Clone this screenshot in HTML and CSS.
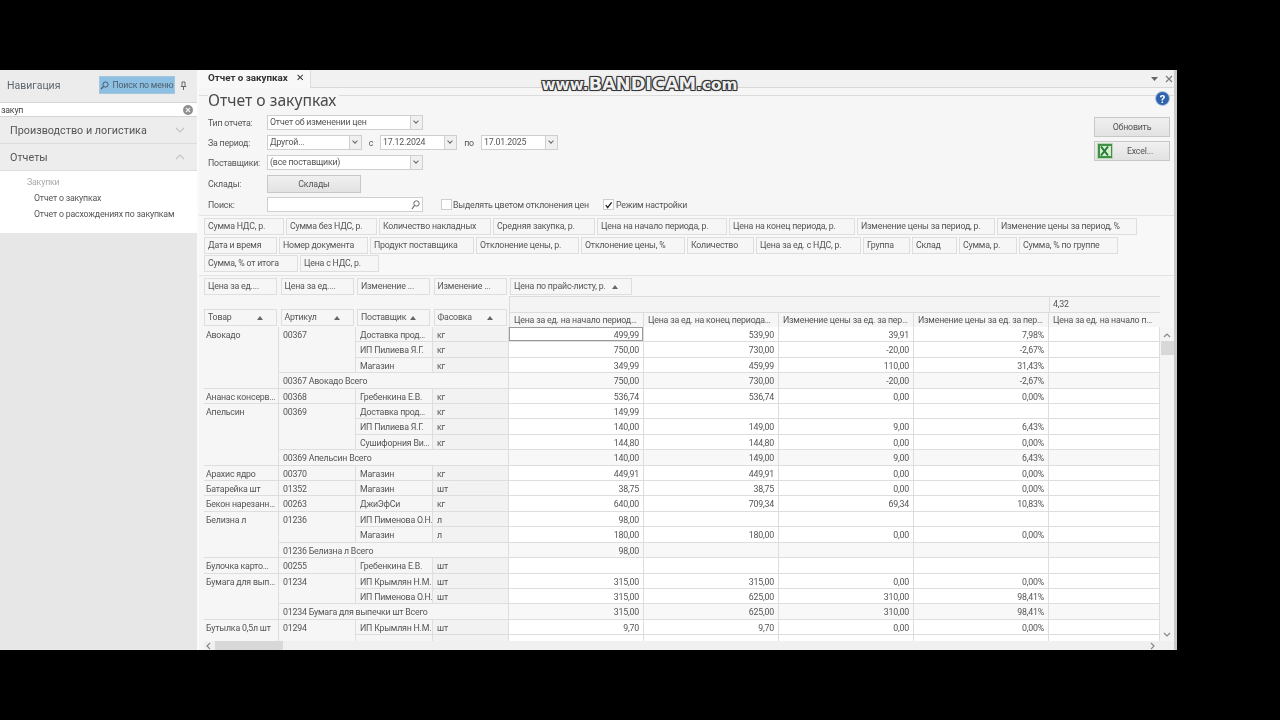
FILE: index.html
```html
<!DOCTYPE html>
<html lang="ru">
<head>
    <meta charset="UTF-8">
    <title>Отчет о закупках</title>
    <link rel="stylesheet" href="styles.css">
</head>
<body>
    <div class="app">
        <!-- Navigation -->
        <aside class="nav">
            <div class="nav-head">
                <span class="nav-title">Навигация</span>
                <button class="nav-find">
                    <svg width="9" height="9" viewBox="0 0 9 9"><circle cx="5.5" cy="3.5" r="2.6" fill="none" stroke="#4a5a68"/><path d="M3.6 5.4 1 8" stroke="#4a5a68" stroke-width="1.2"/></svg>
                    Поиск по меню
                </button>
                <svg class="nav-pin" width="7" height="9" viewBox="0 0 7 9"><path d="M2 1h3v3.5l1 1H1l1-1zM3.5 5.5V9" fill="none" stroke="#666"/></svg>
            </div>
            <div class="nav-search">
                <span>закуп</span>
                <svg width="10" height="10" viewBox="0 0 10 10"><circle cx="5" cy="5" r="5" fill="#8f8f8f"/><path d="M3 3l4 4M7 3 3 7" stroke="#eee" stroke-width="1.2"/></svg>
            </div>
            <div class="nav-section">
                Производство и логистика
                <svg width="10" height="6" viewBox="0 0 10 6"><path d="M1 1l4 4 4-4" fill="none" stroke="#c4c4c4" stroke-width="1.2"/></svg>
            </div>
            <div class="nav-section">
                Отчеты
                <svg width="10" height="6" viewBox="0 0 10 6"><path d="M1 5l4-4 4 4" fill="none" stroke="#c4c4c4" stroke-width="1.2"/></svg>
            </div>
            <div class="nav-items">
                <div class="nav-group">Закупки</div>
                <div class="nav-item">Отчет о закупках</div>
                <div class="nav-item">Отчет о расхождениях по закупкам</div>
            </div>
        </aside>

        <!-- Document -->
        <main class="doc">
            <div class="tabbar">
                <div class="tab">Отчет о закупках <span class="tab-close">✕</span></div>
                <div class="tabbar-tools">
                    <svg width="7" height="4" viewBox="0 0 7 4"><path d="M0 0h7L3.500 4z" fill="#666"/></svg>
                    <svg width="8" height="8" viewBox="0 0 8 8"><path d="M1 1l6 6M7 1 1 7" stroke="#777" stroke-width="1.1"/></svg>
                </div>
            </div>
            <div class="report">
                <h1 class="report-title">Отчет о закупках</h1>
                <svg class="help" width="15" height="15" viewBox="0 0 15 15"><circle cx="7.500" cy="7.500" r="7" fill="#2f62ad" stroke="#b9cbe4"/><text x="7.500" y="11.500" text-anchor="middle" class="help-mark">?</text></svg>

                <div class="report-top">
                    <div class="form">
                        <div class="form-row">
                            <label>Тип отчета:</label>
                            <div class="select wide">Отчет об изменении цен</div>
                        </div>
                        <div class="form-row">
                            <label>За период:</label>
                            <div class="select period">Другой...</div>
                            <span class="sep-c">с</span>
                            <div class="select date">17.12.2024</div>
                            <span class="sep-po">по</span>
                            <div class="select date">17.01.2025</div>
                        </div>
                        <div class="form-row">
                            <label>Поставщики:</label>
                            <div class="select wide">(все поставщики)</div>
                        </div>
                        <div class="form-row tall">
                            <label>Склады:</label>
                            <button class="btn btn-stock">Склады</button>
                        </div>
                        <div class="form-row">
                            <label>Поиск:</label>
                            <div class="search-box">
                                <svg width="9" height="10" viewBox="0 0 9 10"><circle cx="5.500" cy="3.500" r="2.700" fill="none" stroke="#666"/><path d="M3.500 5.500 1 9" stroke="#666" stroke-width="1.200"/></svg>
                            </div>
                            <span class="check first"></span>
                            <span class="check-label">Выделять цветом отклонения цен</span>
                            <span class="check on">
                                <svg width="10" height="10" viewBox="0 0 10 10"><path d="M2 5l2 3 4.500-6" fill="none" stroke="#222" stroke-width="1.500"/></svg>
                            </span>
                            <span class="check-label">Режим настройки</span>
                        </div>
                    </div>
                    <div class="actions">
                        <button class="btn btn-action">Обновить</button>
                        <button class="btn btn-action btn-excel">
                            <svg width="16" height="16" viewBox="0 0 16 16"><rect x=".5" y=".5" width="15" height="15" fill="#3f9148" stroke="#b7d6b4"/><rect x="3" y="3" width="11" height="10" fill="#d9ecd2"/><path d="M4 3.500l7 9M11 3.500l-7 9" stroke="#1f7a33" stroke-width="2"/></svg>
                            <span>Excel...</span>
                        </button>
                    </div>
                </div>

                <div class="chip-panel">
                    <div class="chip-row row-a">
                        <span class="chip">Сумма НДС, р.</span>
                        <span class="chip">Сумма без НДС, р.</span>
                        <span class="chip">Количество накладных</span>
                        <span class="chip">Средняя закупка, р.</span>
                        <span class="chip">Цена на начало периода, р.</span>
                        <span class="chip">Цена на конец периода, р.</span>
                        <span class="chip">Изменение цены за период, р.</span>
                        <span class="chip">Изменение цены за период, %</span>
                    </div>
                    <div class="chip-row row-b">
                        <span class="chip">Дата и время</span>
                        <span class="chip">Номер документа</span>
                        <span class="chip">Продукт поставщика</span>
                        <span class="chip">Отклонение цены, р.</span>
                        <span class="chip">Отклонение цены, %</span>
                        <span class="chip">Количество</span>
                        <span class="chip">Цена за ед. с НДС, р.</span>
                        <span class="chip">Группа</span>
                        <span class="chip">Склад</span>
                        <span class="chip">Сумма, р.</span>
                        <span class="chip">Сумма, % по группе</span>
                    </div>
                    <div class="chip-row row-c">
                        <span class="chip">Сумма, % от итога</span>
                        <span class="chip">Цена с НДС, р.</span>
                    </div>
                </div>

                <!-- Pivot grid -->
                <div class="pivot">
                    <div class="pivot-head">
                        <div class="head-left">
                            <div class="field-row">
                                <span class="chip">Цена за ед....</span>
                                <span class="chip">Цена за ед....</span>
                                <span class="chip">Изменение ...</span>
                                <span class="chip">Изменение ...</span>
                            </div>
                            <div class="field-row">
                                <span class="chip sort">Товар</span>
                                <span class="chip sort">Артикул</span>
                                <span class="chip sort">Поставщик</span>
                                <span class="chip sort">Фасовка</span>
                            </div>
                        </div>
                        <div class="head-right">
                            <div class="price-row"><span class="chip sort near">Цена по прайс-листу, р.</span></div>
                            <div class="band-row"><span class="band-empty"></span><span class="band-value">4,32</span></div>
                            <div class="col-row">
                                <span>Цена за ед. на начало период…</span>
                                <span>Цена за ед. на конец периода…</span>
                                <span>Изменение цены за ед. за пер…</span>
                                <span>Изменение цены за ед. за пер…</span>
                                <span>Цена за ед. на начало п…</span>
                            </div>
                        </div>
                    </div>
                    <div class="pivot-body">
                        <div class="table-clip">
                            <table class="grid">
                                <colgroup>
                                    <col class="c-product"><col class="c-code"><col class="c-vendor"><col class="c-pack">
                                    <col class="c-a"><col class="c-a"><col class="c-a"><col class="c-a"><col class="c-last">
                                </colgroup>
                                <tr><td rowspan="4" class="top">Авокадо</td><td rowspan="3" class="top">00367</td><td>Доставка прод…</td><td class="pack">кг</td><td class="num current">499,99</td><td class="num">539,90</td><td class="num">39,91</td><td class="num">7,98%</td><td class="num"></td></tr>
                                <tr><td>ИП Пилиева Я.Г.</td><td class="pack">кг</td><td class="num">750,00</td><td class="num">730,00</td><td class="num">-20,00</td><td class="num">-2,67%</td><td class="num"></td></tr>
                                <tr><td>Магазин</td><td class="pack">кг</td><td class="num">349,99</td><td class="num">459,99</td><td class="num">110,00</td><td class="num">31,43%</td><td class="num"></td></tr>
                                <tr class="total"><td colspan="3">00367 Авокадо Всего</td><td class="num">750,00</td><td class="num">730,00</td><td class="num">-20,00</td><td class="num">-2,67%</td><td class="num"></td></tr>
                                <tr><td>Ананас консерв…</td><td>00368</td><td>Гребенкина Е.В.</td><td class="pack">кг</td><td class="num">536,74</td><td class="num">536,74</td><td class="num">0,00</td><td class="num">0,00%</td><td class="num"></td></tr>
                                <tr><td rowspan="4" class="top">Апельсин</td><td rowspan="3" class="top">00369</td><td>Доставка прод…</td><td class="pack">кг</td><td class="num">149,99</td><td class="num"></td><td class="num"></td><td class="num"></td><td class="num"></td></tr>
                                <tr><td>ИП Пилиева Я.Г.</td><td class="pack">кг</td><td class="num">140,00</td><td class="num">149,00</td><td class="num">9,00</td><td class="num">6,43%</td><td class="num"></td></tr>
                                <tr><td>Сушифорния Ви…</td><td class="pack">кг</td><td class="num">144,80</td><td class="num">144,80</td><td class="num">0,00</td><td class="num">0,00%</td><td class="num"></td></tr>
                                <tr class="total"><td colspan="3">00369 Апельсин Всего</td><td class="num">140,00</td><td class="num">149,00</td><td class="num">9,00</td><td class="num">6,43%</td><td class="num"></td></tr>
                                <tr><td>Арахис ядро</td><td>00370</td><td>Магазин</td><td class="pack">кг</td><td class="num">449,91</td><td class="num">449,91</td><td class="num">0,00</td><td class="num">0,00%</td><td class="num"></td></tr>
                                <tr><td>Батарейка шт</td><td>01352</td><td>Магазин</td><td class="pack">шт</td><td class="num">38,75</td><td class="num">38,75</td><td class="num">0,00</td><td class="num">0,00%</td><td class="num"></td></tr>
                                <tr><td>Бекон нарезанн…</td><td>00263</td><td>ДжиЭфСи</td><td class="pack">кг</td><td class="num">640,00</td><td class="num">709,34</td><td class="num">69,34</td><td class="num">10,83%</td><td class="num"></td></tr>
                                <tr><td rowspan="3" class="top">Белизна л</td><td rowspan="2" class="top">01236</td><td>ИП Пименова О.Н.</td><td class="pack">л</td><td class="num">98,00</td><td class="num"></td><td class="num"></td><td class="num"></td><td class="num"></td></tr>
                                <tr><td>Магазин</td><td class="pack">л</td><td class="num">180,00</td><td class="num">180,00</td><td class="num">0,00</td><td class="num">0,00%</td><td class="num"></td></tr>
                                <tr class="total"><td colspan="3">01236 Белизна л Всего</td><td class="num">98,00</td><td class="num"></td><td class="num"></td><td class="num"></td><td class="num"></td></tr>
                                <tr><td>Булочка карто…</td><td>00255</td><td>Гребенкина Е.В.</td><td class="pack">шт</td><td class="num"></td><td class="num"></td><td class="num"></td><td class="num"></td><td class="num"></td></tr>
                                <tr><td rowspan="3" class="top">Бумага для вып…</td><td rowspan="2" class="top">01234</td><td>ИП Крымлян Н.М.</td><td class="pack">шт</td><td class="num">315,00</td><td class="num">315,00</td><td class="num">0,00</td><td class="num">0,00%</td><td class="num"></td></tr>
                                <tr><td>ИП Пименова О.Н.</td><td class="pack">шт</td><td class="num">315,00</td><td class="num">625,00</td><td class="num">310,00</td><td class="num">98,41%</td><td class="num"></td></tr>
                                <tr class="total"><td colspan="3">01234 Бумага для выпечки шт Всего</td><td class="num">315,00</td><td class="num">625,00</td><td class="num">310,00</td><td class="num">98,41%</td><td class="num"></td></tr>
                                <tr><td rowspan="2" class="top">Бутылка 0,5л шт</td><td rowspan="2" class="top">01294</td><td>ИП Крымлян Н.М.</td><td class="pack">шт</td><td class="num">9,70</td><td class="num">9,70</td><td class="num">0,00</td><td class="num">0,00%</td><td class="num"></td></tr>
                                <tr><td></td><td class="pack"></td><td class="num"></td><td class="num"></td><td class="num"></td><td class="num"></td><td class="num"></td></tr>
                            </table>
                        </div>
                        <div class="vscroll">
                            <svg width="8" height="5" viewBox="0 0 8 5"><path d="M1 4l3-3 3 3" fill="none" stroke="#888" stroke-width="1.200"/></svg>
                            <span class="vscroll-thumb"></span>
                            <svg class="vscroll-down" width="8" height="5" viewBox="0 0 8 5"><path d="M1 1l3 3 3-3" fill="none" stroke="#888" stroke-width="1.200"/></svg>
                        </div>
                    </div>
                    <div class="hscroll">
                        <svg width="5" height="8" viewBox="0 0 5 8"><path d="M4 1 1 4l3 3" fill="none" stroke="#888" stroke-width="1.200"/></svg>
                        <span class="hscroll-thumb"></span>
                        <svg class="hscroll-right" width="5" height="8" viewBox="0 0 5 8"><path d="M1 1l3 3-3 3" fill="none" stroke="#888" stroke-width="1.200"/></svg>
                    </div>
                </div>
            </div>
        </main>
    </div>

    <!-- Recorder watermark -->
    <div class="watermark">www.<b>BANDICAM</b>.com</div>
</body>
</html>
```

FILE: styles.css
```css
body {
    margin: 0;
    width: 1280px;
    height: 720px;
    overflow: hidden;
    position: relative;
    background: #000;
    font-family: Roboto, "Liberation Sans", sans-serif;
    font-size: 8.800px;
    letter-spacing: -0.2px;
    color: #555;
}

button {
    font: inherit;
    color: inherit;
    letter-spacing: inherit;
}

.app {
    display: flex;
    width: 1177px;
    height: 580px;
    margin-top: 70px;
    background: #f6f6f6;
    filter: blur(0.5px);
}

/* Navigation */
.nav {
    width: 197px;
    flex: none;
    background: #e7e7e7;
    border-right: 2px solid #fafafa;
}
.nav-head {
    height: 32px;
    display: flex;
    align-items: center;
    background: #ececec;
    padding: 0 10px 2px 7px;
    box-sizing: border-box;
}
.nav-title {
    font-size: 10.500px;
    letter-spacing: 0;
    color: #5d6770;
    flex: 1;
}
.nav-find {
    width: 76px;
    height: 18px;
    display: flex;
    align-items: center;
    justify-content: center;
    gap: 3px;
    padding: 0;
    background: #8dbfe2;
    border: 1px solid #a5c6dd;
    color: #4e5d6a;
    white-space: nowrap;
    margin-right: 5px;
}
.nav-search {
    height: 13px;
    display: flex;
    align-items: center;
    justify-content: space-between;
    padding: 0 4px 0 1px;
    background: #fff;
    border: 1px solid #d5d5d5;
    border-width: 1px 0;
    color: #444;
}
.nav-section {
    height: 26px;
    display: flex;
    align-items: center;
    justify-content: space-between;
    padding: 0 12px 0 10px;
    background: #ededed;
    border-bottom: 1px solid #dcdcdc;
    font-size: 10.800px;
    letter-spacing: 0;
    color: #555;
}
.nav-items {
    height: 62px;
    padding-top: 3px;
    box-sizing: border-box;
    background: #fff;
}
.nav-group {
    height: 16px;
    line-height: 16px;
    padding-left: 27px;
    color: #aaa;
}
.nav-item {
    height: 16px;
    line-height: 16px;
    padding-left: 34px;
}

/* Document */
.doc {
    flex: 1;
    min-width: 0;
    display: flex;
    flex-direction: column;
    border-right: 3px solid #c9c9c9;
}
.tabbar {
    height: 17px;
    flex: none;
    display: flex;
    justify-content: space-between;
    background: #f1f1f1;
    border-bottom: 1px solid #d8d8d8;
}
.tab {
    width: 112px;
    box-sizing: border-box;
    padding-left: 9px;
    line-height: 15px;
    background: #f8f8f8;
    font-weight: 700;
    font-size: 9.800px;
    letter-spacing: 0;
    color: #333;
    border-right: 1px solid #ddd;
    height: 18px;
}
.tab-close {
    margin-left: 6px;
    font-weight: 400;
    color: #333;
}
.tabbar-tools {
    display: flex;
    align-items: center;
    gap: 7px;
    padding-right: 1px;
}
.report {
    position: relative;
    margin-top: 7px;
    border-top: 1px solid #dcdcdc;
    flex: 1;
    min-height: 0;
    display: flex;
    flex-direction: column;
}
.report-title {
    margin: -6px 0 0 9px;
    padding-right: 3px;
    width: fit-content;
    height: 20px;
    line-height: 20px;
    background: #f6f6f6;
    font-family: "Noto Sans", sans-serif;
    font-size: 15.700px;
    font-weight: 400;
    letter-spacing: 0;
    color: #4a4a4a;
}
.help {
    position: absolute;
    top: -5px;
    right: 4px;
}
.help-mark {
    font-size: 11px;
    font-weight: 700;
    fill: #fff;
}
.report-top {
    height: 105px;
    flex: none;
    display: flex;
    justify-content: space-between;
    padding: 5px 4px 0 9px;
    box-sizing: border-box;
}
.form {
    display: flex;
    flex-direction: column;
    gap: 5px;
}
.form-row {
    height: 15px;
    display: flex;
    align-items: center;
}
.form-row.tall {
    height: 18px;
    margin-bottom: -1px;
}
.form-row label {
    width: 59px;
    flex: none;
}
.select {
    position: relative;
    height: 15px;
    line-height: 13px;
    padding-left: 2px;
    box-sizing: border-box;
    background: #fff;
    border: 1px solid #cfcfcf;
    color: #555;
}
.select::after {
    content: "";
    position: absolute;
    top: 0;
    right: 0;
    width: 11px;
    height: 13px;
    background: #f0f0f0;
    border-left: 1px solid #cfcfcf;
}
.select::before {
    content: "";
    position: absolute;
    z-index: 1;
    top: 3px;
    right: 4px;
    width: 3px;
    height: 3px;
    border: solid #666;
    border-width: 0 1px 1px 0;
    transform: rotate(45deg);
}
.wide {
    width: 156px;
}
.period {
    width: 95px;
}
.date {
    width: 77px;
}
.sep-c {
    width: 18px;
    text-align: center;
}
.sep-po {
    width: 24px;
    text-align: center;
}
.btn {
    background: linear-gradient(#f0f0f0, #e2e2e2);
    border: 1px solid #c8c8c8;
    padding: 0;
}
.btn-stock {
    width: 94px;
    height: 18px;
}
.search-box {
    width: 156px;
    height: 15px;
    box-sizing: border-box;
    display: flex;
    align-items: center;
    justify-content: flex-end;
    padding-right: 2px;
    background: #fff;
    border: 1px solid #cfcfcf;
}
.check {
    width: 11px;
    height: 11px;
    flex: none;
    box-sizing: border-box;
    background: #fff;
    border: 1px solid #cfcfcf;
    display: flex;
    margin-right: 1px;
}
.check.first {
    margin-left: 18px;
}
.check.on {
    margin-left: 14px;
    margin-right: 2px;
}
.actions {
    display: flex;
    flex-direction: column;
    gap: 4px;
    padding-top: 2px;
}
.btn-action {
    width: 76px;
    height: 20px;
}
.btn-excel {
    display: flex;
    align-items: center;
    padding-left: 2px;
}
.btn-excel span {
    flex: 1;
    text-align: center;
    padding-right: 2px;
}

/* Chips */
.chip-panel {
    height: 61px;
    flex: none;
    display: flex;
    flex-direction: column;
    gap: 1.500px;
    padding: 2px 0 0 5px;
    box-sizing: border-box;
    background: #f8f8f8;
    border: 1px solid #e3e3e3;
    border-width: 1px 0;
}
.chip-row {
    display: grid;
    gap: 2px;
}
.row-a {
    grid-template-columns: 80px 91px 112px 102px 130px 126px 138px 140px;
}
.row-b {
    grid-template-columns: 73px 89px 104px 103px 104px 67px 105px 47px 45px 58px 99px;
}
.row-c {
    grid-template-columns: 94px 79px;
}
.chip {
    height: 17px;
    line-height: 15px;
    padding: 0 0 0 3px;
    box-sizing: border-box;
    background: #f6f6f6;
    border: 1px solid #dedede;
    white-space: nowrap;
    overflow: hidden;
}

/* Pivot grid */
.pivot {
    flex: 1;
    min-height: 0;
    padding: 2px 0 0 5px;
    display: flex;
    flex-direction: column;
}
.pivot-head {
    height: 49px;
    flex: none;
    display: flex;
}
.head-left {
    width: 305px;
    flex: none;
    display: flex;
    flex-direction: column;
    justify-content: space-between;
    padding-bottom: 1px;
    box-sizing: border-box;
}
.field-row {
    display: grid;
    grid-template-columns: 73px 73px 73px 73px;
    gap: 3.500px;
}
.field-row .chip {
    padding-left: 3px;
    line-height: 15px;
}
.sort {
    position: relative;
}
.sort::after {
    content: "";
    position: absolute;
    top: 6px;
    right: 13px;
    border: solid transparent;
    border-width: 0 3.500px 4px;
    border-bottom-color: #666;
}
.near {
    display: block;
    width: 122px;
    margin-left: 1px;
    padding-left: 3px;
}
.head-right {
    width: 651px;
    flex: none;
    display: flex;
    flex-direction: column;
}
.price-row {
    height: 18px;
}
.band-row {
    height: 16px;
    display: flex;
    background: #f4f4f4;
    border-top: 1px solid #dcdcdc;
    box-sizing: border-box;
}
.band-empty {
    width: 539px;
    border-left: 1px solid #dcdcdc;
}
.band-value {
    flex: 1;
    padding-left: 3px;
    line-height: 14px;
    border-left: 1px solid #dcdcdc;
}
.col-row {
    height: 15px;
    display: grid;
    grid-template-columns: 134px 135px 135px 135px 112px;
    border-top: 1px solid #dcdcdc;
    box-sizing: border-box;
    background: #f6f6f6;
}
.col-row span {
    padding-left: 4px;
    line-height: 14px;
    white-space: nowrap;
    overflow: hidden;
    border-left: 1px solid #dcdcdc;
}
.pivot-body {
    height: 314px;
    flex: none;
    display: flex;
}
.table-clip {
    width: 956px;
    height: 314px;
    flex: none;
    overflow: hidden;
}
.grid {
    width: 958px;
    margin-left: -2px;
    table-layout: fixed;
    border-collapse: separate;
    border-spacing: 0;
}
.c-product { width: 77px; }
.c-code { width: 77px; }
.c-vendor { width: 77px; }
.c-pack { width: 76px; }
.c-a { width: 135px; }
.c-last { width: 111px; }
.grid td {
    height: 15.400px;
    padding: 2px 1px 0 4px;
    box-sizing: border-box;
    line-height: 12.400px;
    background: #f6f6f6;
    border: solid #dedede;
    border-width: 0 1px 1px 0;
    white-space: nowrap;
    overflow: hidden;
}
.grid td.top {
    vertical-align: top;
}
.grid td.pack {
    background: #f2f2f2;
}
.grid td.num {
    text-align: right;
    background: #fff;
    padding-right: 4px;
}
.grid tr.total td {
    background: #f6f6f6;
}
.grid tr.total td.num {
    background: #f8f8f8;
}
.grid td.current {
    box-shadow: inset 0 0 0 1px #9a9a9a;
}
.vscroll {
    width: 14px;
    flex: none;
    display: flex;
    flex-direction: column;
    align-items: center;
    padding-top: 6px;
    box-sizing: border-box;
    background: #f4f4f4;
}
.vscroll-thumb {
    width: 13px;
    height: 14px;
    margin-top: 3px;
    background: #d8d8d8;
}
.vscroll-down {
    margin-top: auto;
    margin-bottom: 4px;
}
.hscroll {
    height: 9px;
    flex: none;
    display: flex;
    align-items: center;
    padding: 0 19px 0 2px;
    background: #f0f0f0;
}
.hscroll-thumb {
    width: 68px;
    height: 9px;
    margin-left: 4px;
    background: #d8d8d8;
}
.hscroll-right {
    margin-left: auto;
}

/* Watermark lies over the capture */
.watermark {
    position: absolute;
    top: 74px;
    left: 531px;
    width: 217px;
    text-align: center;
    font-family: "DejaVu Sans", sans-serif;
    font-weight: 700;
    font-size: 15.300px;
    letter-spacing: 0;
    line-height: 20px;
    white-space: nowrap;
    color: #f0f0f0;
    text-shadow: -1px -1px 0 #333, 1px -1px 0 #333, -1px 1px 0 #333, 1px 1px 0 #333, 0 0 3px #888;
}
.watermark b {
    font-size: 17.700px;
}
```
